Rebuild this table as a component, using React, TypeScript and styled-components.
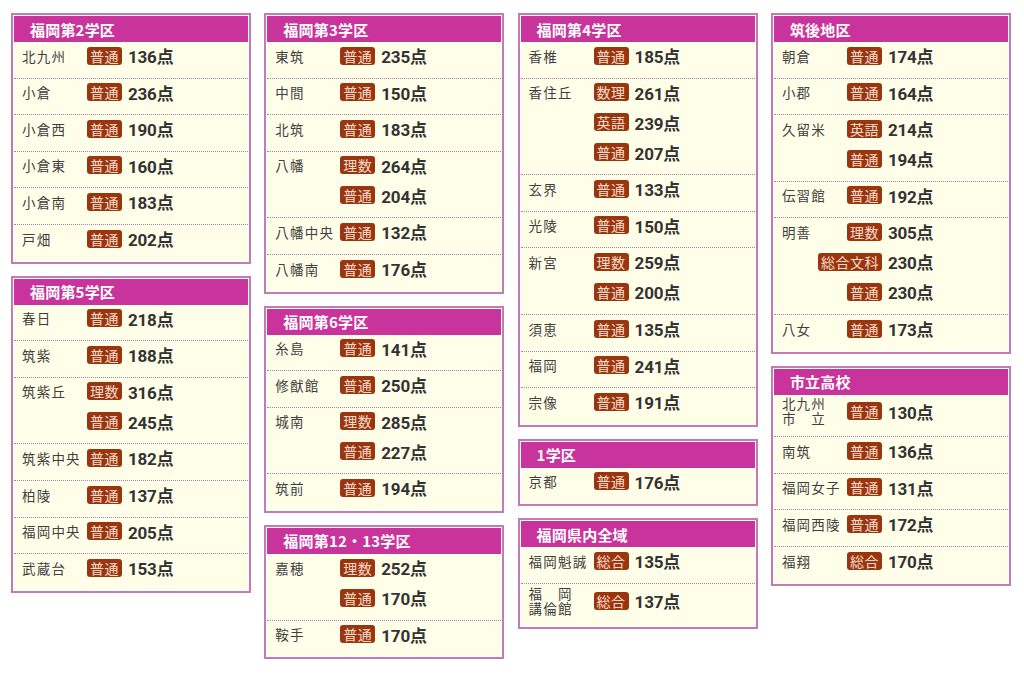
import styled, { createGlobalStyle } from 'styled-components';

const GlobalStyle = createGlobalStyle`
  body {
    margin: 0;
    background: #ffffff;
    font-family: "Noto Sans CJK JP", "Noto Sans", sans-serif;
  }
`;

type Line = { kind: string; score: number };
type School = { name: string; lines: Line[] };
type Region = { title: string; schools: School[] };

const g = (score: number): Line => ({ kind: '普通', score });
const s = (name: string, ...lines: Line[]): School => ({ name, lines });

const columns: Region[][] = [
  [
    {
      title: '福岡第2学区',
      schools: [
        s('北九州', g(136)),
        s('小倉', g(236)),
        s('小倉西', g(190)),
        s('小倉東', g(160)),
        s('小倉南', g(183)),
        s('戸畑', g(202)),
      ],
    },
    {
      title: '福岡第5学区',
      schools: [
        s('春日', g(218)),
        s('筑紫', g(188)),
        s('筑紫丘', { kind: '理数', score: 316 }, g(245)),
        s('筑紫中央', g(182)),
        s('柏陵', g(137)),
        s('福岡中央', g(205)),
        s('武蔵台', g(153)),
      ],
    },
  ],
  [
    {
      title: '福岡第3学区',
      schools: [
        s('東筑', g(235)),
        s('中間', g(150)),
        s('北筑', g(183)),
        s('八幡', { kind: '理数', score: 264 }, g(204)),
        s('八幡中央', g(132)),
        s('八幡南', g(176)),
      ],
    },
    {
      title: '福岡第6学区',
      schools: [
        s('糸島', g(141)),
        s('修猷館', g(250)),
        s('城南', { kind: '理数', score: 285 }, g(227)),
        s('筑前', g(194)),
      ],
    },
    {
      title: '福岡第12・13学区',
      schools: [
        s('嘉穂', { kind: '理数', score: 252 }, g(170)),
        s('鞍手', g(170)),
      ],
    },
  ],
  [
    {
      title: '福岡第4学区',
      schools: [
        s('香椎', g(185)),
        s('香住丘', { kind: '数理', score: 261 }, { kind: '英語', score: 239 }, g(207)),
        s('玄界', g(133)),
        s('光陵', g(150)),
        s('新宮', { kind: '理数', score: 259 }, g(200)),
        s('須恵', g(135)),
        s('福岡', g(241)),
        s('宗像', g(191)),
      ],
    },
    {
      title: '1学区',
      schools: [s('京都', g(176))],
    },
    {
      title: '福岡県内全域',
      schools: [
        s('福岡魁誠', { kind: '総合', score: 135 }),
        s('福　岡\n講倫館', { kind: '総合', score: 137 }),
      ],
    },
  ],
  [
    {
      title: '筑後地区',
      schools: [
        s('朝倉', g(174)),
        s('小郡', g(164)),
        s('久留米', { kind: '英語', score: 214 }, g(194)),
        s('伝習館', g(192)),
        s('明善', { kind: '理数', score: 305 }, { kind: '総合文科', score: 230 }, g(230)),
        s('八女', g(173)),
      ],
    },
    {
      title: '市立高校',
      schools: [
        s('北九州\n市　立', g(130)),
        s('南筑', g(136)),
        s('福岡女子', g(131)),
        s('福岡西陵', g(172)),
        s('福翔', { kind: '総合', score: 170 }),
      ],
    },
  ],
];

const Page = styled.div`
  display: grid;
  grid-template-columns: repeat(4, 240px);
  column-gap: 13.3px;
  align-items: start;
  padding: 13px 11px;
`;

const Column = styled.div`
  display: flex;
  flex-direction: column;
  gap: 12px;
`;

const Card = styled.section`
  border: 2px solid #c47ab3;
  padding: 1px;
  background: #ffffff;
`;

const Header = styled.h2`
  margin: 0;
  height: 26px;
  padding-left: 16px;
  display: flex;
  align-items: center;
  background: #c8349c;
  color: #ffffff;
  font-size: 15px;
  font-weight: 700;
  letter-spacing: 0.2px;
`;

const Body = styled.div`
  background: #fffee9;
`;

const Row = styled.div<{ $center: boolean }>`
  display: flex;
  align-items: ${(p) => (p.$center ? 'center' : 'flex-start')};
  padding: 1.6px 0 10px 8px;
  & + & {
    border-top: 1px dotted #b27db3;
  }
`;

const Name = styled.div<{ $twoLine: boolean }>`
  flex: 0 0 66px;
  font-size: 13.5px;
  line-height: ${(p) => (p.$twoLine ? '15px' : '24px')};
  letter-spacing: 1.2px;
  color: #3f3f3f;
  white-space: pre;
`;

const Scores = styled.div`
  display: flex;
  flex-direction: column;
  gap: 6px;
`;

const ScoreLine = styled.div`
  display: flex;
  align-items: center;
  height: 24px;
  gap: 6px;
`;

const BadgeSlot = styled.div`
  width: 34px;
  display: flex;
  justify-content: flex-end;
`;

const Badge = styled.span`
  flex-shrink: 0;
  white-space: nowrap;
  height: 18px;
  line-height: 18px;
  padding: 0 3px;
  border-radius: 3px;
  background: #9a360f;
  color: #f7dccb;
  font-size: 14px;
  letter-spacing: 0.5px;
`;

const Score = styled.span`
  font-family: Roboto, "Noto Sans CJK JP", sans-serif;
  font-size: 17px;
  font-weight: 700;
  color: #333333;
  letter-spacing: -0.2px;
`;

function RegionCard({ region }: { region: Region }) {
  return (
    <Card>
      <Header>{region.title}</Header>
      <Body>
        {region.schools.map((school) => (
          <Row key={school.name} $center={school.lines.length === 1}>
            <Name $twoLine={school.name.includes('\n')}>{school.name}</Name>
            <Scores>
              {school.lines.map((line, i) => (
                <ScoreLine key={i}>
                  <BadgeSlot>
                    <Badge>{line.kind}</Badge>
                  </BadgeSlot>
                  <Score>{line.score}点</Score>
                </ScoreLine>
              ))}
            </Scores>
          </Row>
        ))}
      </Body>
    </Card>
  );
}

export default function App() {
  return (
    <>
      <GlobalStyle />
      <Page>
        {columns.map((col, i) => (
          <Column key={i}>
            {col.map((region) => (
              <RegionCard key={region.title} region={region} />
            ))}
          </Column>
        ))}
      </Page>
    </>
  );
}
